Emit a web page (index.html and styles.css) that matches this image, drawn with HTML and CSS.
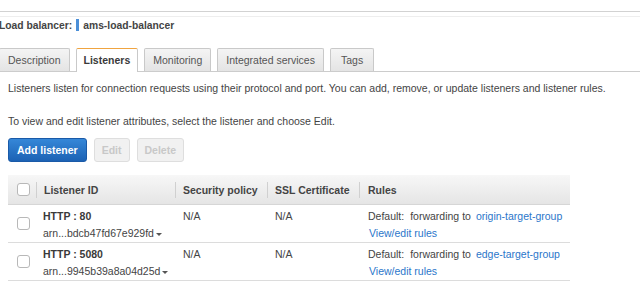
FILE: index.html
```html
<!DOCTYPE html>
<html>
<head>
<meta charset="utf-8">
<link rel="stylesheet" href="styles.css">
</head>
<body>
<div class="topbar"></div>
<div class="lb-header">
  <div class="lb-title">
    <span class="lb-label">Load balancer:</span>
    <span class="lb-bar"></span>
    <span class="lb-name">ams-load-balancer</span>
  </div>
  <div class="tabs">
    <div class="tab">Description</div>
    <div class="tab active">Listeners</div>
    <div class="tab">Monitoring</div>
    <div class="tab">Integrated services</div>
    <div class="tab">Tags</div>
  </div>
</div>
<div class="content">
  <p class="intro">Listeners listen for connection requests using their protocol and port. You can add, remove, or update listeners and listener rules.</p>
  <p class="hint">To view and edit listener attributes, select the listener and choose Edit.</p>
  <div class="actions">
    <button class="btn primary">Add listener</button>
    <button class="btn disabled">Edit</button>
    <button class="btn disabled">Delete</button>
  </div>
  <div class="table">
    <div class="thead">
      <div class="th cb-col"><span class="checkbox"></span></div>
      <div class="th">Listener ID</div>
      <div class="th">Security policy</div>
      <div class="th">SSL Certificate</div>
      <div class="th">Rules</div>
    </div>
    <div class="tr">
      <div class="td cb-col"><span class="checkbox"></span></div>
      <div class="td">
        <div class="proto">HTTP : 80</div>
        <div class="arn">arn...bdcb47fd67e929fd <span class="caret"></span></div>
      </div>
      <div class="td">N/A</div>
      <div class="td">N/A</div>
      <div class="td">
        <div class="rule"><span class="rule-def">Default:</span><span class="rule-fwd">forwarding to</span><a class="link">origin-target-group</a></div>
        <div class="rule-edit"><a class="link">View/edit rules</a></div>
      </div>
    </div>
    <div class="tr">
      <div class="td cb-col"><span class="checkbox"></span></div>
      <div class="td">
        <div class="proto">HTTP : 5080</div>
        <div class="arn">arn...9945b39a8a04d25d <span class="caret"></span></div>
      </div>
      <div class="td">N/A</div>
      <div class="td">N/A</div>
      <div class="td">
        <div class="rule"><span class="rule-def">Default:</span><span class="rule-fwd">forwarding to</span><a class="link">edge-target-group</a></div>
        <div class="rule-edit"><a class="link">View/edit rules</a></div>
      </div>
    </div>
  </div>
</div>
</body>
</html>
```
FILE: styles.css
```css
html, body {
  margin: 0;
  padding: 0;
  background: #fff;
}
body {
  font-family: "Liberation Sans", Arial, sans-serif;
  font-size: 10.5px;
  color: #444;
}
.topbar {
  height: 11px;
  border-bottom: 1px solid #d2d2d2;
}
.lb-header {
  margin-top: 4px;
  border-top: 1px solid #eeeeee;
}
.lb-title {
  display: flex;
  align-items: center;
  height: 16px;
  margin-left: -1px;
  font-weight: bold;
  font-size: 10.3px;
  color: #444;
  line-height: 13px;
}
.lb-bar {
  width: 3px;
  height: 12px;
  background: #4b8fd8;
  margin: 0 4px 0 4px;
}
.tabs {
  display: flex;
  align-items: flex-end;
  gap: 6px;
  margin-top: 14px;
  margin-left: -1px;
  border-bottom: 1px solid #cccccc;
  height: 24px;
}
.tab {
  height: 22px;
  line-height: 22px;
  padding: 0 8px;
  border: 1px solid #c9c9c9;
  border-bottom: none;
  border-radius: 2px 2px 0 0;
  background: linear-gradient(#f4f4f4, #e4e4e4);
  color: #555;
}
.tab:last-child {
  padding: 0 10px;
}
.tab.active {
  background: #fff;
  border-top: 1px solid #f0a440;
  font-weight: bold;
  color: #3a3a3a;
  height: 23px;
  line-height: 23px;
  margin-bottom: -1px;
  padding: 0 7px;
}
.content {
  padding: 0 8px;
}
.intro {
  margin: 8px 0 0;
  line-height: 17px;
}
.hint {
  margin: 16px 0 0;
  line-height: 17px;
}
.actions {
  display: flex;
  gap: 7px;
  margin-top: 8px;
}
.btn {
  height: 24px;
  font-family: inherit;
  font-size: 10.5px;
  font-weight: bold;
  border-radius: 3px;
  padding: 0 7px;
}
.btn.primary {
  padding: 0 8px;
  color: #fff;
  background: linear-gradient(#3587d8, #1c62b4);
  border: 1px solid #1a5aa8;
}
.btn.disabled {
  color: #c8c8c8;
  background: #f1f1f1;
  border: 1px solid #dedede;
}
.table {
  margin-top: 13px;
  width: 562px;
}
.thead, .tr {
  display: grid;
  grid-template-columns: 28px 139px 92px 92px 211px;
}
.thead {
  height: 29px;
  background: linear-gradient(#f7f7f7, #e5e5e5);
  border-bottom: 1px solid #d6d6d6;
}
.th {
  display: flex;
  align-items: center;
  font-weight: bold;
  color: #444;
}
.th + .th::before {
  content: "";
  width: 1px;
  height: 16px;
  background: #d0d0d0;
  margin-right: 7px;
}
.th:last-child::before {
  margin-right: 8px;
}
.cb-col {
  display: flex;
  align-items: center;
  padding-left: 9px;
}
.checkbox {
  display: block;
  width: 11px;
  height: 11px;
  border: 1px solid #b8b8b8;
  border-radius: 3px;
  background: #fff;
}
.tr {
  height: 37px;
  border-bottom: 1px solid #dcdcdc;
}
.td {
  padding-top: 3px;
  padding-left: 8px;
  line-height: 17px;
}
.tr .td:nth-child(2) {
  padding-left: 7px;
}
.tr .td:nth-child(5) {
  padding-left: 9px;
}
.tr .cb-col {
  padding-top: 0;
  padding-left: 9px;
}
.proto {
  font-weight: bold;
  color: #3a3a3a;
}
.arn {
  color: #444;
}
.caret {
  display: inline-block;
  width: 0;
  height: 0;
  border-left: 3px solid transparent;
  border-right: 3px solid transparent;
  border-top: 3px solid #555;
  vertical-align: middle;
  margin-left: -1px;
}
.rule-def {
  margin-right: 6px;
}
.rule-fwd {
  margin-right: 5px;
}
.link {
  color: #2b76ca;
  text-decoration: none;
}
.rule-edit {
  padding-left: 1px;
}
```
